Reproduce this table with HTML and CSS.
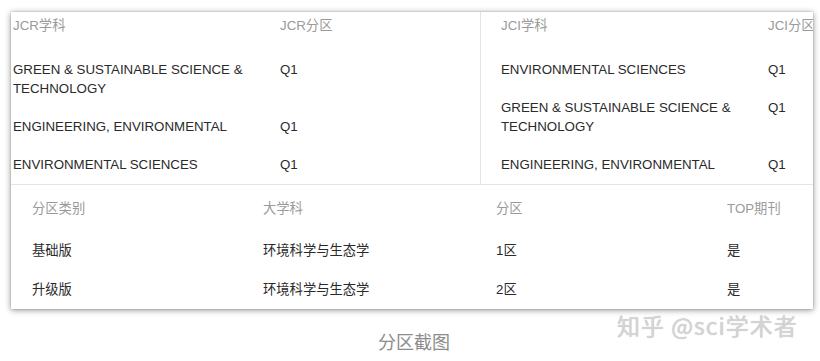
FILE: index.html
```html
<!DOCTYPE html>
<html lang="zh">
<head>
<meta charset="utf-8">
<link rel="stylesheet" href="styles.css">
</head>
<body>
<div class="page">
  <div class="card">
    <div class="top">
      <div class="half left">
        <div class="grid">
          <div class="hd">JCR学科</div><div class="hd">JCR分区</div>
          <div class="cell subj">GREEN &amp; SUSTAINABLE SCIENCE &amp; TECHNOLOGY</div><div class="cell">Q1</div>
          <div class="cell subj">ENGINEERING, ENVIRONMENTAL</div><div class="cell">Q1</div>
          <div class="cell subj">ENVIRONMENTAL SCIENCES</div><div class="cell">Q1</div>
        </div>
      </div>
      <div class="half right">
        <div class="grid">
          <div class="hd">JCI学科</div><div class="hd">JCI分区</div>
          <div class="cell subj">ENVIRONMENTAL SCIENCES</div><div class="cell">Q1</div>
          <div class="cell subj">GREEN &amp; SUSTAINABLE SCIENCE &amp; TECHNOLOGY</div><div class="cell">Q1</div>
          <div class="cell subj">ENGINEERING, ENVIRONMENTAL</div><div class="cell">Q1</div>
        </div>
      </div>
    </div>
    <div class="bottom">
      <div class="hd2">分区类别</div><div class="hd2">大学科</div><div class="hd2">分区</div><div class="hd2">TOP期刊</div>
      <div class="c2">基础版</div><div class="c2">环境科学与生态学</div><div class="c2">1区</div><div class="c2">是</div>
      <div class="c2">升级版</div><div class="c2">环境科学与生态学</div><div class="c2">2区</div><div class="c2">是</div>
    </div>
  </div>
  <div class="caption">分区截图</div>
  <div class="watermark">知乎 @sci学术者</div>
</div>
</body>
</html>
```

FILE: styles.css
```css
* { box-sizing: border-box; }
html, body { margin: 0; padding: 0; background: #fff; }
body {
  font-family: "Liberation Sans", Arial, "Noto Sans CJK SC", sans-serif;
  font-size: 13.3px;
  line-height: 19px;
  color: #2a2a2a;
}
.page {
  position: relative;
  width: 820px;
  height: 361px;
  padding: 12px 7px 0 11px;
}
.card {
  width: 802px;
  height: 297px;
  background: #fff;
  box-shadow: 0 1px 6px rgba(0, 0, 0, 0.45), 0 0 1px rgba(0,0,0,0.3);
  display: flex;
  flex-direction: column;
}
.top {
  display: flex;
  height: 173px;
  border-bottom: 1px solid #e4e4e4;
}
.half { overflow: hidden; }
.left { width: 470px; border-right: 1px solid #e4e4e4; padding-left: 2px; }
.right { flex: 1; padding-left: 20px; }
.grid {
  display: grid;
  grid-template-columns: 267px 200px;
}
.hd {
  color: #9a9a9a;
  padding: 4px 0 14px;
  white-space: nowrap;
  height: 38px;
}
.cell {
  padding: 9.5px 0;
}
.subj { padding-right: 16px; }
.bottom {
  flex: 1;
  display: grid;
  grid-template-columns: 231px 233px 231px 1fr;
  grid-template-rows: 46px 39px 39px;
  padding-left: 21px;
}
.hd2 {
  color: #9a9a9a;
  padding-top: 14px;
}
.c2 { padding-top: 10px; }
.caption {
  margin-top: 20px;
  text-align: center;
  padding-left: 4px;
  font-family: "Noto Sans CJK SC", sans-serif;
  font-size: 18px;
  line-height: 24px;
  color: #8c8c8c;
}
.watermark {
  position: absolute;
  left: 617px;
  top: 310px;
  font-family: "Noto Sans CJK SC", sans-serif;
  font-size: 23px;
  line-height: 30px;
  color: #d4d4d4;
  letter-spacing: 1px;
  text-shadow: 0 0 1px #bbb;
}
```
